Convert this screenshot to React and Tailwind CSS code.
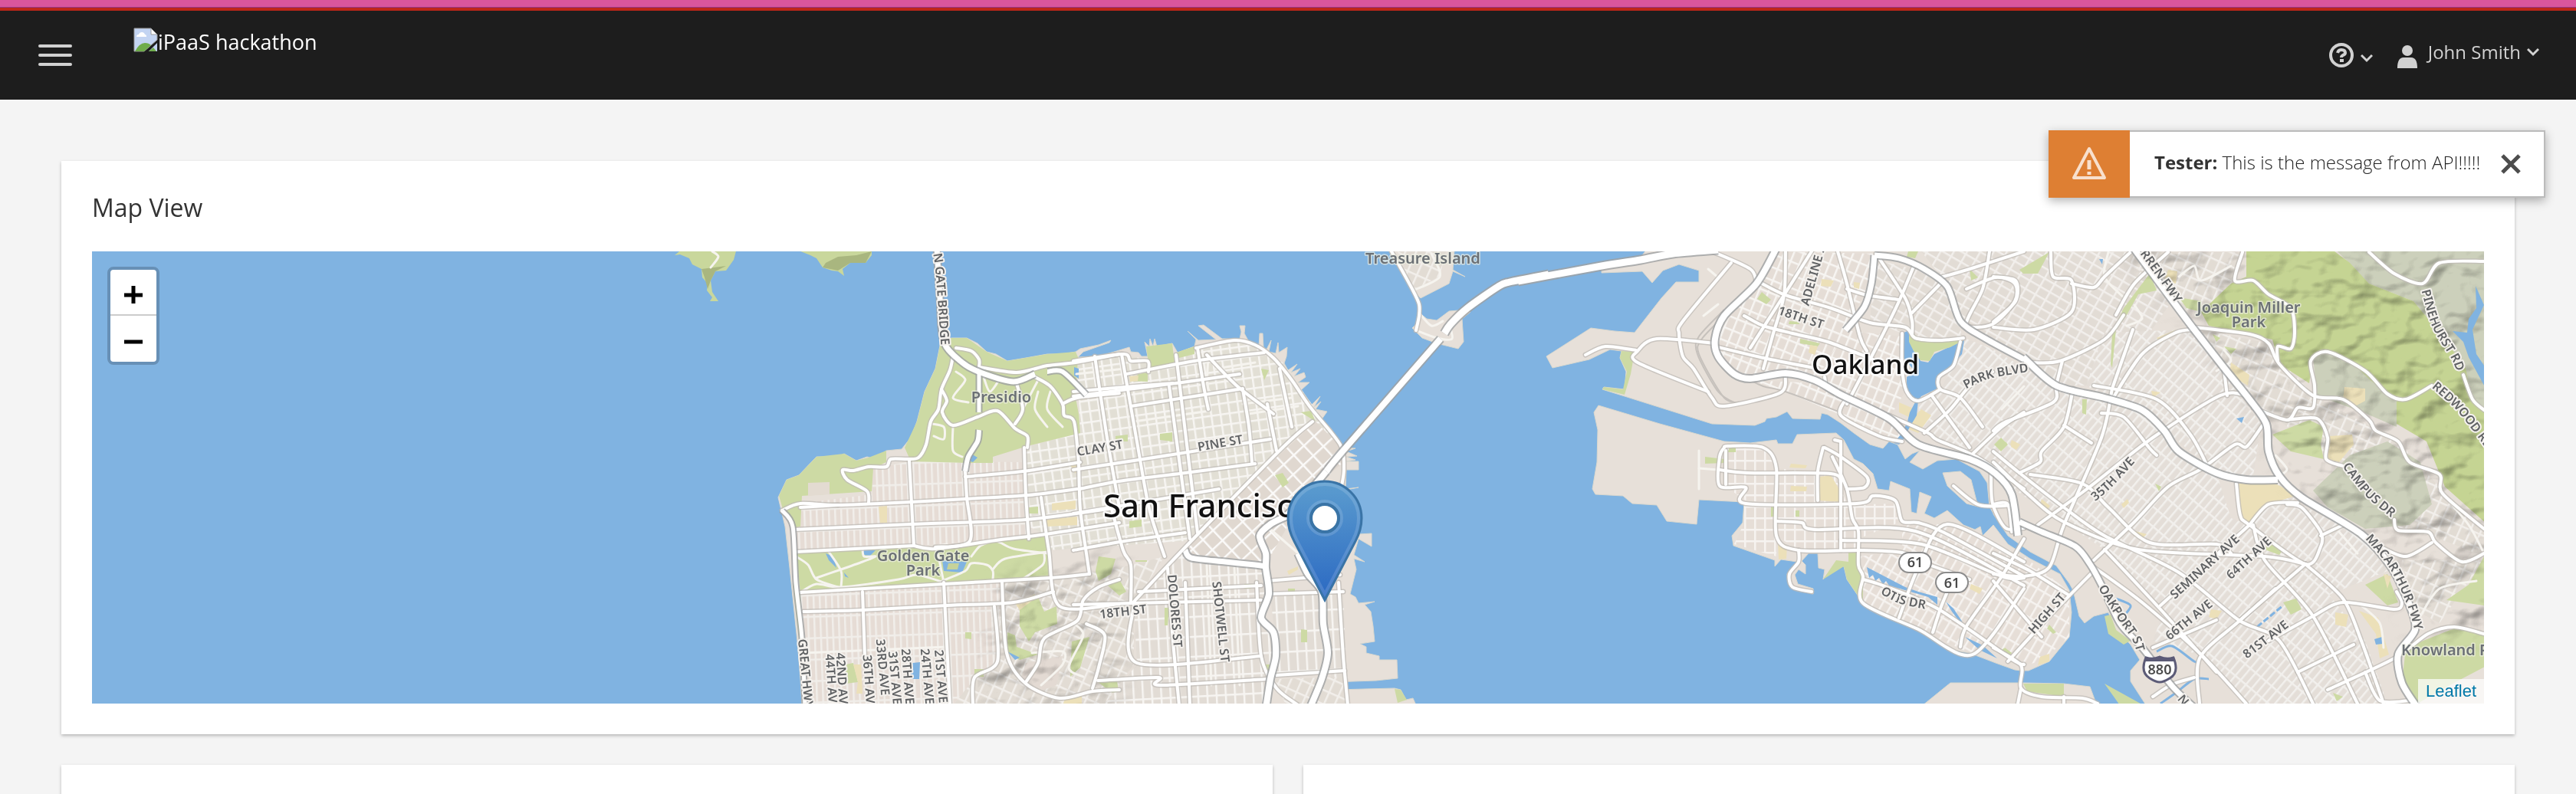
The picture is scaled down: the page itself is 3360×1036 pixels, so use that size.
import React from "react";

/* ---------- Map data ----------
   Geometry is stored per tile. Every tile has its own 1568 x 1568 grid and is
   projected on the shared map canvas. */
const GRID = 1568;
const TILES = {
  W: [840, 320, 620, 600],
  C: [1400, 320, 620, 600],
  O: [1980, 320, 660, 600],
  E: [2600, 320, 760, 716],
};

function points(tile, list) {
  const [ox, oy, w, h] = TILES[tile];
  return list
    .trim()
    .split(/\s+/)
    .map((pair) => {
      const [x, y] = pair.split(",").map(Number);
      return [Math.round(ox + (x * w) / GRID), Math.round(oy + (y * h) / GRID)];
    });
}

function trace(...parts) {
  const all = [];
  for (let i = 0; i < parts.length; i += 2) all.push(...points(parts[i], parts[i + 1]));
  return "M" + all.map((p) => p.join(" ")).join("L");
}

function smooth(tile, list) {
  const p = points(tile, list);
  if (p.length < 3) return "M" + p.map((q) => q.join(" ")).join("L");
  let d = `M${p[0].join(" ")}`;
  for (let i = 0; i < p.length - 1; i++) {
    const a = p[i - 1] || p[i];
    const b = p[i];
    const c = p[i + 1];
    const e = p[i + 2] || c;
    d += `C${b[0] + (c[0] - a[0]) / 7} ${b[1] + (c[1] - a[1]) / 7} ${c[0] - (e[0] - b[0]) / 7} ${c[1] - (e[1] - b[1]) / 7} ${c[0]} ${c[1]}`;
  }
  return d;
}

const SF = trace(
  "W",
  "978,330 1015,315 1065,315 1100,335 1130,362 1160,370 1200,395 1260,385 1330,372 1380,372 1425,362 1440,352 1500,340 1540,323 1535,333 1450,362 1432,382 1500,380 1568,357",
  "C",
  "185,348 190,362 215,365 225,380 245,380 236,330 250,345 253,318 262,345 268,318 275,345 325,335 345,365 400,345 405,322 378,293 412,325 470,322 413,275 430,272 490,318 550,318 555,295 548,275 566,275 565,300 577,325 613,345 615,300 625,300 628,347 638,355 653,325 645,362 668,368 674,333 678,365 705,348 704,380 695,402 708,425 738,405 718,435 748,420 728,448 762,435 766,450 742,468 778,468 752,495 765,525 783,545 815,515 793,552 817,532 800,560 838,568 820,592 850,625 890,690 930,692 900,702 935,718 900,722 930,733 900,738 942,738 942,767 900,767 897,830 940,825 900,834 895,900 940,985 985,983 985,1028 940,1000 925,1055 960,1080 925,1070 932,1105 912,1190 930,1200 940,1220 995,1215 960,1225 980,1250 988,1300 995,1352 945,1360 965,1370 965,1390 1008,1402 1008,1415 1068,1413 1070,1477 1000,1485 850,1490 832,1486 862,1515 1060,1510 1080,1515 1098,1550 1120,1545 1130,1568",
  "W",
  "520,1568 515,1480 505,1350 490,1200 480,1100 465,960 455,915 443,860 470,800 510,785 570,722 640,722 660,712 700,735 735,722 760,730 800,700 850,695 880,655 900,600 925,500 960,420",
);

const EAST_BAY = trace(
  "O",
  "395,20 385,35 380,50 260,82 260,95 385,88 415,128 450,85 500,65 560,85 560,125 490,125 445,180 360,297 300,292 225,283 88,380 107,418 220,390 285,355 320,360 315,385 335,430 330,490 265,483 262,492 330,515 600,608 735,615 765,602 770,590 800,585 835,567 850,590 935,593 940,573 960,578 1000,605 1040,640 1090,680 1130,693 1150,670 1175,680 1200,728 1220,710 1245,700 1215,740 1255,763 1300,735 1360,730 1430,770 1455,810 1460,890 1473,915",
  "E",
  "0,768 40,830 100,875 170,915 205,965 215,985 232,1060 245,1080 270,1060 310,1050 330,1100 370,1140 395,1185 370,1215 370,1245 415,1320 1340,1320 1340,10",
  "O",
  "395,10",
);

const ALAMEDA = trace(
  "O",
  "250,547 235,570 248,630 245,740 230,830 240,850 325,855 355,880 430,885 462,942 553,950 560,868 700,875 697,945 662,990 668,1025 795,1075 797,1095 815,1072 865,1080 835,1120 840,1160 855,1170 915,1190 915,1170 868,1155 858,1125 870,1105 890,1120 890,1090 880,1076 900,1050 930,1050 932,1100 950,1105 945,1140 970,1105 990,1085 1010,1095 1020,1140 1070,1220 1100,1240 1240,1315 1340,1380 1400,1390 1480,1425 1540,1448",
  "E",
  "75,1215 95,1215 150,1190 205,1120 210,1050 205,985 180,940 100,895 40,855 0,800",
  "O",
  "1440,990 1432,960 1415,970 1380,955 1330,905 1290,930 1258,915 1280,858 1245,842 1235,915 1218,910 1215,830 1155,805 1150,835 1115,830 1100,780 1070,745 1040,730 1010,665 985,640 865,645 850,678 805,678 800,665 720,675 640,670 440,610",
);

const LAND = [
  SF,
  EAST_BAY,
  ALAMEDA,
  trace("C", "1040,15 1075,80 1120,155 1145,180 1240,130 1252,90 1293,107 1253,84 1258,15"),
  trace("C", "1140,230 1165,250 1200,255 1240,225 1270,222 1310,227 1283,250 1287,330 1270,353 1240,345 1200,335 1150,315 1118,283 1135,265"),
  trace("O", "1315,775 1370,770 1405,800 1425,890 1390,880 1330,820"),
  trace("O", "1240,1580 1340,1493 1568,1493", "E", "190,1253 260,1262 280,1320"),
];

const HEADLANDS = [
  trace("W", "100,35 130,10 305,10 295,50 270,85 235,90 220,120 225,160 245,190 218,190 225,178 207,155 210,130 192,110 190,80 160,65 150,45 120,32"),
  trace("W", "490,10 550,35 570,45 590,75 620,85 640,90 660,105 655,80 680,60 730,60 750,35 752,10"),
];

const PARKS = [
  trace("W", "978,330 1015,315 1065,315 1130,362 1200,395 1330,372 1425,362 1432,382 1425,520 1435,575 1440,640 1265,685 1150,720 1150,742 1070,742 880,738 860,690 900,600 925,500 960,420"),
  trace("W", "570,722 660,712 700,735 740,725 800,700 800,740 755,760 750,840 520,855 515,960 490,965 460,910 445,855 470,800 510,785"),
  trace("W", "500,1045 890,1025 960,1035 1100,1015 1320,985 1335,1045 1335,1130 1300,1140 980,1160 650,1175 515,1185"),
  trace("W", "490,1150 515,1190 520,1400 505,1300"),
  trace("W", "1240,1220 1300,1200 1320,1250 1360,1230 1362,1290 1290,1320 1270,1350 1240,1300"),
  trace("W", "1200,1320 1225,1330 1230,1370 1300,1395 1240,1415 1200,1390"),
  trace("W", "1410,1350 1470,1335 1440,1440 1405,1470"),
  trace("W", "1500,1060 1555,1070 1540,1120 1500,1145 1490,1110"),
  trace("W", "1060,1320 1080,1320 1080,1342 1060,1340"),
  trace("W", "1090,1445 1120,1445 1120,1470 1090,1470"),
  trace("W", "1530,1160 1568,1140 1590,1180 1568,1195"),
  trace("W", "1270,895 1300,890 1300,915 1270,915"),
  trace("W", "665,1430 690,1425 705,1490 665,1495"),
  trace("C", "240,345 325,335 335,400 250,420"),
  trace("C", "340,365 400,345 400,370 350,385"),
  trace("C", "215,440 245,435 245,465 190,462"),
  trace("C", "285,642 325,637 325,668 285,665"),
  trace("C", "140,650 180,645 180,668 140,668"),
  trace("C", "620,420 645,425 630,460"),
  trace("C", "185,940 225,935 225,960 185,965"),
  trace("C", "665,785 690,775 710,810 690,825"),
  trace("C", "205,1075 243,1073 243,1080 205,1080"),
  trace("C", "300,1235 315,1235 310,1295 300,1295"),
  trace("C", "750,1310 772,1313 772,1355 750,1355"),
  trace("C", "708,1170 732,1170 732,1185 708,1185"),
  trace("C", "565,1155 600,1155 585,1172 565,1172"),
  trace("C", "80,1490 145,1485 150,1520 130,1525"),
  trace("C", "630,1430 650,1430 645,1455"),
  trace("C", "1060,1513 1080,1515 1100,1550 1070,1560"),
  trace("C", "750,570 785,565 800,600"),
  trace("O", "320,360 362,362 350,440 330,510 262,490 265,483 325,490 337,430 315,385"),
  trace("O", "755,160 783,185 770,202 742,182"),
  trace("O", "875,318 935,335 930,345 875,335"),
  trace("O", "840,258 875,262 872,270 838,268"),
  trace("O", "580,722 640,728 640,742 580,745"),
  trace("O", "655,685 675,690 675,705 650,705"),
  trace("O", "1025,1048 1050,1048 1055,1090 1070,1130 1070,1220 1020,1140 1010,1095 945,1140 985,1075 1025,1080"),
  trace("O", "1495,660 1515,675 1495,695 1478,680"),
  trace("O", "1400,80 1425,110 1405,120"),
  trace("O", "1210,20 1240,20 1230,45 1205,40"),
  trace("O", "1505,1375 1530,1390 1515,1405 1495,1390"),
  trace("O", "860,905 872,905 872,925 860,925"),
  trace("O", "785,890 795,890 795,925 785,925"),
  trace("E", "420,80 440,130 390,140 360,200 330,240 320,350 315,340 320,250 350,180"),
  trace("E", "70,70 150,20 120,80 80,80"),
  trace("E", "500,150 560,160 560,190 520,180"),
  trace("E", "750,540 850,500 890,520 880,570 890,610 800,590"),
  trace("E", "1000,970 1060,940 1090,1020 1060,1030"),
  trace("E", "1320,890 1320,1030 1220,1015 1280,970"),
  trace("E", "1110,1150 1240,1095 1330,1110 1330,1200 1240,1250 1140,1310 1100,1250"),
  trace("E", "780,1020 815,1010 830,1040 800,1055"),
  trace("E", "300,1060 315,1055 330,1100 370,1130 350,1140 310,1110"),
  trace("E", "80,1253 190,1253 190,1290 90,1275"),
  trace("E", "300,1253 415,1320 345,1320"),
  trace("E", "20,550 40,570 20,588 2,570"),
  trace("E", "620,290 655,295 640,310"),
  trace("E", "590,255 610,265 600,275"),
  trace("E", "240,440 252,440 250,485 240,480"),
  trace("E", "150,1085 170,1105 160,1110 145,1095"),
  trace("E", "30,1150 50,1165 40,1175 20,1165"),
  trace("E", "915,1280 940,1290 925,1302"),
  trace("E", "740,840 780,870 770,885 730,870"),
  trace("E", "435,680 452,690 445,702"),
];

const REGIONAL_PARK = trace(
  "E",
  "680,10 910,10 960,50 1010,110 1130,160 1200,250 1270,350 1285,430 1330,480 1330,800 1215,690 1165,560 1085,510 1085,440 1020,390 960,330 900,300 860,320 850,395 770,340 750,270 680,255 580,230 560,190 640,110 680,90",
);

const SCHOOLS = [
  trace("W", "775,890 802,888 802,945 778,945"),
  trace("W", "1345,880 1425,870 1425,900 1345,905"),
  trace("W", "1325,935 1430,925 1430,955 1330,960"),
  trace("W", "1405,750 1435,745 1425,780"),
  trace("W", "1225,1220 1290,1190 1290,1205 1240,1245"),
  trace("W", "690,1430 715,1430 720,1530 700,1530 705,1490"),
  trace("W", "1390,1540 1445,1535 1445,1568 1380,1568"),
  trace("C", "705,1110 740,1095 740,1105 710,1125"),
  trace("C", "185,448 215,445 212,462 187,465"),
  trace("O", "940,115 978,120 970,142 938,138"),
  trace("O", "1040,125 1060,128 1058,148 1040,145"),
  trace("O", "935,790 970,785 997,835 997,875 932,870"),
  trace("O", "845,745 895,750 890,760 842,758"),
  trace("O", "845,820 895,822 893,838 843,838"),
  trace("O", "805,1010 835,1025 832,1070 808,1072"),
  trace("O", "1180,535 1230,560 1220,590 1180,570"),
  trace("O", "1250,560 1280,580 1240,640 1205,625 1225,585"),
  trace("O", "1405,1155 1440,1170 1430,1190 1400,1170"),
  trace("O", "1530,665 1555,680 1545,695 1525,680"),
  trace("O", "905,340 930,345 920,375 900,365"),
  trace("E", "470,70 495,75 490,110 460,100"),
  trace("E", "640,335 690,370 685,400 635,370"),
  trace("E", "945,405 1000,410 1000,445 965,465 940,440"),
  trace("E", "905,545 965,540 970,570 930,620 900,610"),
  trace("E", "660,680 760,682 820,715 740,740 690,800 665,770"),
  trace("E", "375,815 412,825 400,838 378,830"),
  trace("E", "425,415 450,420 430,435"),
  trace("E", "920,1050 955,1055 950,1090 920,1085"),
  trace("E", "985,1045 1035,1065 1065,1170 1040,1180 1030,1110"),
  trace("E", "130,725 152,745 145,758 125,740"),
  trace("E", "585,1040 615,1045 600,1068 580,1062"),
  trace("E", "345,740 362,725 365,735 350,752"),
  trace("E", "440,265 490,240 470,260 450,280"),
  trace("E", "50,560 72,570 62,585 48,575"),
  trace("E", "1050,940 1070,945 1060,980"),
  trace("E", "125,1175 150,1168 150,1190 120,1200"),
];

const LAKES = [
  trace("O", "1190,300 1212,290 1230,350 1248,395 1270,400 1290,372 1370,330 1382,325 1375,370 1350,405 1330,425 1305,450 1305,485 1250,515 1240,530 1235,580 1212,625 1195,660 1180,680 1165,675 1190,640 1208,600 1215,570 1230,535 1205,500 1205,450 1230,430 1195,385"),
  trace("W", "720,1038 765,1040 745,1058 725,1055"),
  trace("W", "600,1050 625,1060 635,1100 610,1075"),
  trace("W", "985,1075 1065,1080 1050,1115 990,1110"),
  trace("W", "660,1115 675,1135 662,1130"),
  trace("W", "1420,415 1435,420 1435,455 1418,445"),
  trace("W", "1080,710 1100,725 1085,740 1070,735"),
  trace("W", "885,1425 910,1422 908,1480 878,1480"),
  trace("W", "1198,1385 1240,1405 1225,1415"),
  trace("O", "1080,1097 1200,1165 1240,1180 1300,1200 1300,1225 1270,1200 1240,1190 1150,1160 1140,1145 1130,1158 1120,1135 1108,1145 1100,1125 1088,1135"),
  trace("O", "1325,1215 1350,1240 1378,1285 1365,1280 1345,1250"),
  trace("O", "1385,1335 1440,1365 1485,1408 1430,1380"),
  trace("E", "1297,115 1320,170 1290,240 1300,310 1330,360 1330,420 1280,320 1265,275 1235,245 1275,250 1280,210 1300,180"),
  trace("E", "655,495 675,490 668,508"),
  trace("E", "1025,1125 1045,1120 1048,1138 1030,1142"),
  trace("E", "285,40 295,40 293,55"),
];

const LAKE_PARK = trace("O", "1212,290 1250,325 1380,325 1340,348 1290,362 1275,395 1248,393 1225,360 1212,330");

/* Dense residential blocks: [pattern id, outline] */
const BLOCKS = [
  ["avenues", trace("W", "515,880 750,850 755,760 880,738 1250,740 1270,1000 890,1025 500,1045 495,965 515,960")],
  ["avenues", trace("W", "515,1190 990,1155 1180,1150 1165,1420 1090,1480 1020,1568 525,1568")],
  ["marina", trace("W", "1430,400 1568,370", "C", "245,390 345,375 560,325 690,400 880,680 790,600 560,830 370,1010", "W", "1335,1040 1320,985 1270,960 1250,690 1440,640")],
  ["soma", trace("C", "800,600 885,690 890,740 760,860 640,1080 390,1060 370,1030 560,830")],
  ["mission", trace("C", "370,1040 390,1070 600,1090 640,1100 620,1270 665,1330 650,1470 640,1568 100,1568 210,1430 200,1225")],
  ["mission", trace("C", "650,1200 890,1180 905,1568 840,1568 850,1460 660,1465 665,1330")],
  ["hillside", trace("W", "1180,1150 1335,1140 1568,1100", "C", "300,1060 200,1220 200,1430 100,1568", "W", "1020,1568 1090,1480 1165,1420")],
  ["hillside", trace("C", "665,1480 905,1470 905,1568 700,1568")],
  ["hillside", trace("C", "1070,20 1230,20 1210,105 1120,155")],
  ["westOakland", trace("O", "650,250 740,140 800,20 1100,30 1090,130 1015,290 930,450 830,437 720,455 640,400 610,330")],
  ["westOakland", trace("O", "1015,290 1190,310 1200,500 1150,590 930,460")],
  ["westOakland", trace("O", "720,460 930,470 1150,600 1200,665 1130,660 1000,580 830,500")],
  ["uptown", trace("O", "1110,50 1260,90 1330,160 1380,320 1250,325 1090,260")],
  ["uptown", trace("O", "1250,20 1568,20", "E", "380,20 480,160 320,400 170,400 0,270", "O", "1390,270 1320,120")],
  ["eastOakland", trace("O", "1240,520 1310,490 1390,320 1473,355", "E", "170,405 400,470 500,590 600,650 640,780 690,800 450,1030 300,870 60,700", "O", "1400,720 1250,640")],
  ["eastOakland", trace("E", "470,1010 690,800 840,910 1000,1130 1060,1310 690,1310 550,1170 430,1130")],
  ["eastOakland", trace("E", "250,400 300,250 530,240 720,510 700,660 600,650 450,520")],
  ["eastOakland", trace("E", "770,670 820,735 990,830 1060,930 900,1000 840,910 690,800 650,680")],
  ["hillside", trace("E", "340,20 670,20 640,110 560,200 490,170")],
  ["hillside", trace("E", "560,240 740,280 860,430 1090,560 1210,700 1320,810 1320,890 1180,830 1060,800 900,600 700,450")],
  ["hillside", trace("E", "1100,900 1320,900 1200,1080 1130,1040")],
  ["alameda", trace("O", "640,690 760,690 800,760 980,780 1020,880 800,880 705,870 640,820")],
  ["alameda", trace("O", "800,890 1170,880 1190,940 1055,1000 1055,1045 870,1040 800,990")],
  ["alameda", trace("O", "700,880 800,890 800,1060 670,1020 700,945")],
  ["diagonal", trace("O", "1190,950 1330,950 1568,1060", "E", "205,990 205,1120 130,1190 80,1200 0,1150", "O", "1410,1395 1070,1220 1060,1060 1190,1040")],
];

const HILLS = [
  trace("E", "920,10 1330,10 1330,480 1285,430 1270,350 1200,250 1130,160 1010,110"),
  trace("E", "860,700 960,600 1060,560 1150,620 1180,740 1120,800 1000,810 900,750"),
  trace("E", "900,300 960,330 1085,440 1085,520 1000,480 870,430 860,320"),
];

const RELIEF = [
  ...HILLS,
  trace("E", "340,10 1330,10 1330,900 1100,880 990,820 780,650 720,480 540,240"),
  trace("W", "1160,1150 1568,1040 1568,1568 1100,1568"),
  trace("E", "1080,820 1330,880 1330,1120 1120,1100"),
];

const MINOR = [
  ["W", "500,1060 540,1090 570,1140 640,1165"],
  ["W", "610,1045 650,1110 650,1165"],
  ["W", "570,1135 650,1105 720,1080 765,1060 725,1060 720,1030"],
  ["W", "985,1145 1060,1110 1080,1085 1130,1090 1150,1110 1150,1140"],
  ["W", "1080,1060 1110,1025 1160,1010 1220,1035 1330,1050"],
  ["W", "1150,1105 1190,1070 1330,1045"],
  ["W", "515,1185 570,1155 650,1165 840,1140 900,1125 990,1150"],
  ["W", "990,1150 970,1060 960,1030 1000,1020"],
  ["W", "1320,1050 1315,1090 1240,1145"],
  ["W", "1030,430 1060,460 1020,520 1070,535"],
  ["W", "1120,450 1140,500 1170,460"],
  ["W", "1250,560 1300,460"],
  ["W", "1300,500 1290,560 1330,620"],
  ["W", "1340,500 1330,560 1380,620"],
  ["W", "1020,620 1020,700 1050,720"],
  ["W", "950,610 990,620 990,660 955,650"],
  ["W", "525,1390 1000,1370"],
  ["W", "1280,1390 1380,1385 1380,1430 1310,1500"],
  ["W", "1420,1290 1450,1330 1400,1440 1450,1470"],
  ["W", "220,75 245,40 225,20"],
  ["C", "10,440 170,420"],
  ["C", "200,600 450,565"],
  ["C", "445,380 450,500 560,485"],
  ["C", "470,420 600,400"],
  ["C", "560,540 720,520"],
  ["C", "580,575 740,550"],
  ["C", "1120,155 1210,108 1180,30"],
  ["C", "1140,230 1180,275 1220,260"],
  ["C", "1130,290 1200,315 1250,320 1240,270"],
  ["C", "640,960 830,1130"],
  ["C", "440,1090 455,1500"],
  ["C", "530,1100 550,1500"],
  ["O", "560,700 560,830"],
  ["O", "560,760 620,765"],
  ["O", "575,240 620,200"],
  ["O", "590,80 620,110"],
  ["O", "1500,560 1568,480"],
  ["E", "310,20 300,90 350,150"],
  ["E", "380,170 400,210 360,230"],
  ["E", "500,90 540,60 560,100 640,60"],
  ["E", "620,300 640,330 600,360"],
  ["E", "760,600 790,640 770,660"],
  ["E", "1200,700 1280,800 1320,880"],
  ["E", "990,1030 1040,1080 1050,1150"],
  ["E", "930,820 980,880"],
  ["E", "1150,1060 1200,980 1300,960"],
];

const MAJOR = [
  ["W", "1060,770 1065,860 1075,1010 960,1030"],
  ["W", "1105,415 1230,435 1330,410 1425,400 1568,370"],
  ["W", "1030,350 1080,360 1105,390 1105,415"],
  ["W", "1020,380 1010,425 980,490 970,560 945,600 930,680 905,725 870,730 815,730 800,755 740,755 690,768 655,765 670,800 735,840 740,880"],
  ["W", "980,490 1000,530 985,570 1020,615 1100,585 1165,565 1225,625 1265,650 1265,690"],
  ["W", "1225,610 1250,560 1230,470"],
  ["W", "1290,450 1340,480 1380,540 1385,580 1420,600 1435,740"],
  ["W", "1380,540 1430,520 1568,505"],
  ["W", "455,905 515,880 640,887 880,875 1060,865 1270,852 1430,830"],
  ["W", "515,893 640,887"],
  ["W", "495,970 880,950 1260,935 1568,895"],
  ["W", "500,1045 890,1025"],
  ["W", "890,1025 960,1035 1160,1005 1325,985 1568,945"],
  ["W", "875,735 890,1025"],
  ["W", "1255,690 1260,850 1270,1000"],
  ["W", "1060,790 1250,770 1440,740"],
  ["W", "515,1185 990,1155 1340,1135 1470,1120"],
  ["W", "525,1250 720,1243 1000,1228 1220,1218 1350,1180"],
  ["W", "720,1180 728,1400"],
  ["W", "990,1150 1010,1568"],
  ["W", "1180,1150 1195,1390 1260,1495 1370,1545 1480,1520 1568,1515"],
  ["W", "1155,1230 1165,1420 1090,1475 1085,1568"],
  ["W", "1310,860 1335,1040 1370,1230 1568,1222"],
  ["W", "1435,740 1440,900 1460,1050 1470,1120"],
  ["W", "1260,1490 1300,1425 1320,1340 1430,1280 1450,1210 1500,1165 1568,1140"],
  ["W", "1460,1290 1520,1330 1500,1440 1480,1510"],
  ["C", "0,395 165,370 190,395 245,395 248,430"],
  ["C", "175,440 400,395 630,365"],
  ["C", "0,515 340,470 550,440"],
  ["C", "0,500 200,480 330,470"],
  ["C", "190,550 400,515 560,488"],
  ["C", "70,380 110,640 150,880"],
  ["C", "160,370 215,700 250,900 300,1060"],
  ["C", "340,375 375,680 410,980"],
  ["C", "315,480 385,1000"],
  ["C", "410,350 430,480 445,560"],
  ["C", "440,375 540,480 660,575"],
  ["C", "0,765 200,735 650,660"],
  ["C", "20,830 150,805 370,775 600,745"],
  ["C", "0,915 200,880 480,830"],
  ["C", "0,1040 170,1010 370,980"],
  ["C", "120,870 165,1040 190,1090 190,1215"],
  ["C", "560,490 580,620 590,740"],
  ["C", "640,540 670,700"],
  ["C", "680,420 720,620"],
  ["C", "405,350 530,325 600,340 660,385 720,460 780,550 880,680 892,760 885,820"],
  ["C", "200,1215 370,1030 690,690 790,600"],
  ["C", "215,1180 620,1160"],
  ["C", "0,1225 200,1220 620,1210"],
  ["C", "200,1225 210,1425 620,1400"],
  ["C", "310,1100 330,1350 350,1568"],
  ["C", "370,1150 385,1568"],
  ["C", "605,1150 620,1400 670,1510 740,1568"],
  ["C", "80,1485 280,1475 285,1500 640,1480"],
  ["C", "640,1145 880,1125"],
  ["C", "640,1190 890,1180"],
  ["C", "670,1465 895,1450"],
  ["C", "875,1150 890,1400 905,1568"],
  ["C", "1050,20 1120,155 1140,200 1140,240 1130,290"],
  ["O", "600,22 720,80 740,130"],
  ["O", "660,60 510,260 500,300 510,380 545,420 600,520 640,550 810,505 830,450"],
  ["O", "210,375 270,345 365,358"],
  ["O", "590,500 370,400 370,360 430,320 610,335"],
  ["O", "610,345 760,385 930,420"],
  ["O", "740,120 830,170 970,215 1090,265 1200,280 1230,315 1310,325 1380,315"],
  ["O", "700,240 760,275 850,300 960,330 1100,390"],
  ["O", "830,20 825,170 790,300 760,420"],
  ["O", "910,20 840,140 720,350"],
  ["O", "990,20 1020,130 1060,310 1080,360"],
  ["O", "1230,60 1180,190 1120,330 1020,540"],
  ["O", "1110,30 1200,180 1220,260 1220,300"],
  ["O", "1020,150 1080,170 1180,185"],
  ["O", "950,450 960,490 1000,510"],
  ["O", "1020,520 1000,580 1120,650 1190,670"],
  ["O", "1190,300 1190,420 1205,500 1240,530 1310,490"],
  ["O", "1370,330 1350,410 1305,450 1310,490 1370,520 1440,620"],
  ["O", "1260,640 1340,560 1400,480 1470,430"],
  ["O", "1150,580 1270,640 1300,665 1420,720 1568,830"],
  ["O", "1280,510 1400,690"],
  ["O", "1400,720 1500,620 1568,570"],
  ["O", "1310,110 1400,80 1568,20"],
  ["O", "1460,20 1440,150 1390,270 1470,270 1540,190 1540,130 1480,110 1390,150"],
  ["O", "1220,230 1310,130"],
  ["O", "640,690 650,685 760,690 800,760 800,990 870,1040 1055,1040 1190,1048 1250,1080 1400,1140"],
  ["O", "640,690 625,720 625,820 705,825 705,880 1050,880 1100,855 1170,870 1190,940 1240,945 1320,980 1568,1130"],
  ["O", "645,700 645,815"],
  ["O", "625,765 710,775 970,780 1000,810"],
  ["O", "800,940 880,945 920,970 1230,975 1568,1160"],
  ["O", "1000,1005 1250,1020 1500,1130 1568,1135"],
  ["O", "1000,670 1000,1040"],
  ["O", "980,665 1000,670"],
  ["O", "945,690 930,770 930,870"],
  ["O", "950,690 1000,720 1080,790 1075,825 1020,830"],
  ["O", "975,720 1020,830 1035,930 1055,975 1055,1090 1070,1130 1070,1220 1240,1310 1410,1395 1568,1170"],
  ["O", "1180,1270 1240,1100 1330,950 1568,1080"],
  ["O", "1285,1320 1310,1240 1330,1180"],
  ["O", "1370,1370 1390,1300 1500,1130 1568,1000"],
  ["O", "1070,1140 1130,1160 1300,1240 1530,1410 1568,1430"],
  ["O", "870,1040 870,1080 840,1120 850,1165 910,1180"],
  ["O", "1350,820 1430,885 1540,885"],
  ["O", "1465,780 1470,880 1510,965 1568,965"],
  ["E", "0,590 70,650 190,750 300,830 500,935 660,1070 770,1130 860,1310"],
  ["E", "0,620 90,710 190,790 390,870 730,890 840,910"],
  ["E", "840,910 940,1010 990,1130 1050,1310"],
  ["E", "100,655 240,680 310,750 420,850 600,855 640,880"],
  ["E", "0,530 30,505 160,450 170,400 185,330"],
  ["E", "215,410 190,520 130,590 125,620 70,650"],
  ["E", "190,515 265,565"],
  ["E", "320,410 290,550 190,800 150,920 80,945 0,940"],
  ["E", "270,900 380,790 470,690 560,640 650,570 680,575 725,515"],
  ["E", "120,800 260,690 430,550 610,430 680,430"],
  ["E", "270,400 440,440 530,540 580,640"],
  ["E", "290,480 350,490 420,580 440,600"],
  ["E", "350,200 300,270 180,330 100,335"],
  ["E", "375,240 320,410"],
  ["E", "330,200 380,110 470,20"],
  ["E", "320,440 400,310 490,250 540,240"],
  ["E", "0,235 110,240 210,190 210,100 160,90 155,20"],
  ["E", "0,90 60,100 60,160 0,220"],
  ["E", "210,110 270,120 300,90 370,20"],
  ["E", "630,430 620,360"],
  ["E", "540,235 690,255 740,280 770,340 860,430 940,440 1010,500 1030,530 1090,560 1120,620 1200,655 1210,710 1320,810"],
  ["E", "670,20 650,100 700,100 740,140 800,180 810,250 800,295 765,290 765,330"],
  ["E", "700,465 790,500 820,465 860,465 865,400 855,330 900,305 1000,360 1060,425 1110,440 1180,400"],
  ["E", "1010,20 1080,80 1155,110 1200,50 1320,45"],
  ["E", "1265,370 1290,440 1320,470"],
  ["E", "790,500 870,495 900,550 895,610 940,630"],
  ["E", "1080,785 1090,815 1170,820 1190,850 1260,905 1320,880"],
  ["E", "1040,860 1110,890 1180,850"],
  ["E", "655,680 665,770 690,800 840,910 880,860 880,820 830,750 790,740"],
  ["E", "690,800 740,740 820,735"],
  ["E", "880,830 940,800"],
  ["E", "555,1310 555,1180 660,1075 840,910"],
  ["E", "270,920 400,1020 560,1170 680,1310"],
  ["E", "300,870 450,1040 600,1220"],
  ["E", "700,800 730,900 860,1060 980,1310"],
  ["E", "660,1075 760,980"],
  ["E", "740,1130 860,1060 940,1020 1080,1040 1100,1020 1085,990"],
  ["E", "820,1220 970,1140"],
  ["E", "900,1270 1080,1180 1170,1110 1240,1090 1320,1110"],
  ["E", "1000,1220 1040,1300 1120,1300"],
  ["E", "450,1030 690,800"],
  ["E", "430,1150 600,1070"],
  ["E", "0,880 100,930 205,1000"],
  ["E", "0,960 130,1120"],
  ["E", "40,1190 150,1060 270,930"],
  ["E", "0,1150 75,1200 75,1265 130,1290 240,1295 280,1310"],
  ["E", "75,1265 65,1310"],
  ["E", "190,1290 190,1310"],
  ["E", "430,1290 480,1255 540,1235"],
  ["E", "0,740 40,740 50,820"],
];

/* [tile, course, width] */
const FREEWAYS = [
  ["W", "965,10 975,180 990,330 1050,400 1110,435 1220,465 1290,440", 7],
  ["W", "1330,430 1380,430 1460,510", 6],
  ["W", "1105,440 1105,570", 5],
  ["W", "1105,630 1100,670 1070,720 1060,770", 6],
  ["W", "455,905 490,960 500,1150 520,1340 530,1568", 5],
  ["C", "370,1040 390,1065 500,1078 600,1090 635,1095", 7],
  ["C", "700,925 650,950 615,990 635,1050 635,1100 645,1190 620,1270 660,1320 668,1400 650,1480 635,1580", 8],
  ["C", "700,925 780,840 835,770", 8],
  ["C", "740,1050 775,1120 820,1180 825,1290 840,1390 820,1480 780,1580", 8],
  ["C", "835,770 890,700 1212,318", 8],
  ["C", "1225,300 1245,270 1300,215 1400,140 1440,125 1568,100", 9],
  ["O", "0,122 260,70 380,50 480,30 620,15", 9],
  ["O", "800,10 740,130 640,240 610,320 620,380 670,440 720,455 830,437 920,460 1000,510 1150,590 1240,680 1400,730 1480,780 1530,850 1550,990", 8],
  ["O", "1105,35 1180,45 1260,80 1330,140 1370,260 1450,320 1568,390", 7],
  ["O", "1105,35 1095,130 1075,210 1015,290", 7],
  ["E", "80,320 170,400 300,435 400,470 460,530 500,590 600,650 680,670 765,670", 8],
  ["E", "380,10 490,170 540,240 620,350 690,440 735,510 740,590 770,660 830,720 990,825 1070,920 1120,1030 1135,1100 1090,1170 1100,1250 1140,1320", 8],
  ["E", "70,790 130,820 220,860 260,910 290,970 340,1080 400,1150 480,1260 540,1320", 7],
];

const STREET_LABELS = [
  ["N GATE BRIDGE", "W", "946,-8 960,80 978,330 984,380"],
  ["CLAY ST", "C", "0,722 180,690"],
  ["PINE ST", "C", "395,705 580,672"],
  ["18TH ST", "C", "70,1275 260,1253"],
  ["DOLORES ST", "C", "308,1095 335,1400"],
  ["SHOTWELL ST", "C", "454,1115 490,1455"],
  ["GREAT HWY", "W", "506,1315 533,1610"],
  ["44TH AVE", "W", "597,1375 612,1605"],
  ["42ND AVE", "W", "632,1375 647,1605"],
  ["36TH AVE", "W", "722,1380 737,1605"],
  ["33RD AVE", "W", "765,1325 785,1555"],
  ["31ST AVE", "W", "804,1362 824,1592"],
  ["28TH AVE", "W", "846,1355 866,1590"],
  ["24TH AVE", "W", "910,1355 930,1590"],
  ["21ST AVE", "W", "957,1355 977,1590"],
  ["ADELINE ST", "O", "895,230 965,-40"],
  ["18TH ST", "O", "792,230 955,290"],
  ["PARK BLVD", "O", "1355,510 1460,455 1620,425"],
  ["OTIS DR", "O", "1105,1175 1180,1220 1280,1243"],
  ["RREN FWY", "E", "385,10 440,90 500,180"],
  ["35TH AVE", "E", "260,745 320,690 395,605"],
  ["HIGH ST", "E", "95,1130 210,990"],
  ["OAKPORT ST", "E", "270,960 330,1060 375,1130 390,1185"],
  ["SEMINARY AVE", "E", "465,1035 690,820"],
  ["64TH AVE", "E", "620,975 770,830"],
  ["66TH AVE", "E", "455,1145 610,1015"],
  ["81ST AVE", "E", "660,1200 820,1070"],
  ["PINEHURST RD", "E", "1145,100 1180,230 1235,330 1255,390"],
  ["REDWOOD RD", "E", "1165,395 1250,475 1340,600"],
  ["CAMPUS DR", "E", "920,605 1000,715 1095,800"],
  ["MACARTHUR FWY", "E", "985,820 1065,920 1115,1030 1140,1125"],
  ["N", "E", "485,1285 520,1330"],
];

const at = (tile, pair) => points(tile, pair)[0];

const PLACES = [
  ["Treasure Island", at("C", "1153,62")],
  ["Presidio", at("W", "1179,537")],
  ["Golden Gate", at("W", "920,1076")],
  ["Park", at("W", "920,1127")],
  ["Joaquin Miller", at("E", "687,193")],
  ["Park", at("E", "688,235")],
];

/* [id, cell width, cell height, angle, block colour, street colour] */
const PATTERNS = [
  ["avenues", 8, 28, -2, "#e6dcd5", "#f1eeea"],
  ["marina", 12, 14, -8, "#e2dfd5", "#f7f5f2"],
  ["soma", 18, 18, -43, "#e0d8d0", "#fbfaf9"],
  ["mission", 12, 26, -3, "#e2dcd5", "#f7f5f2"],
  ["hillside", 13, 17, 24, "#e2dcd4", "#f2efeb"],
  ["westOakland", 12, 16, 22, "#e5ddd6", "#f7f5f2"],
  ["uptown", 15, 12, 30, "#e2dcd5", "#f2efec"],
  ["eastOakland", 9, 20, 40, "#e4ded8", "#f2f0ed"],
  ["alameda", 13, 15, 0, "#e6ded7", "#f6f3f0"],
  ["diagonal", 11, 19, 30, "#e6ded7", "#f6f3f0"],
];

function MapArt() {
  return (
    <svg
      className="block h-full w-full"
      viewBox="120 328 3120 590"
      preserveAspectRatio="xMidYMid slice"
      role="img"
      aria-label="Map of San Francisco and Oakland"
    >
      <defs>
        {PATTERNS.map(([id, w, h, angle, fill, line]) => (
          <pattern key={id} id={id} width={w} height={h} patternUnits="userSpaceOnUse" patternTransform={`rotate(${angle})`}>
            <rect width={w} height={h} fill={fill} />
            <path d={`M0 0H${w}M0 0V${h}`} stroke={line} strokeWidth="5" />
          </pattern>
        ))}
        <linearGradient id="pin" x1="0" y1="0" x2="0" y2="1">
          <stop offset="0" stopColor="#5c9dcf" />
          <stop offset="1" stopColor="#2a68c2" />
        </linearGradient>
        <filter id="relief" x="0" y="0" width="1" height="1" colorInterpolationFilters="sRGB">
          <feTurbulence type="fractalNoise" baseFrequency="0.018 0.026" numOctaves="3" seed="8" />
          <feDiffuseLighting surfaceScale="10" diffuseConstant="1.15" lightingColor="#ffffff" result="lit">
            <feDistantLight azimuth="225" elevation="60" />
          </feDiffuseLighting>
          <feGaussianBlur in="SourceAlpha" stdDeviation="14" result="soft" />
          <feComposite in="lit" in2="soft" operator="in" />
        </filter>
        <clipPath id="ground">
          <path d={SF} />
          <path d={EAST_BAY} />
        </clipPath>
      </defs>

      <rect x="0" y="300" width="3360" height="660" fill="#80b3e1" />

      <g fill="#e7e0d9" stroke="#d9d8cf" strokeWidth="1">
        {LAND.map((d, i) => <path key={i} d={d + "Z"} />)}
      </g>
      {BLOCKS.map(([id, d], i) => (
        <path key={i} d={d + "Z"} fill={`url(#${id})`} />
      ))}
      <g clipPath="url(#ground)" fill="#ccd0bb">
        {HILLS.map((d, i) => <path key={i} d={d + "Z"} />)}
      </g>
      <g fill="#c9d79c">
        {HEADLANDS.map((d, i) => <path key={i} d={d + "Z"} />)}
      </g>
      <g fill="#a9b67f">
        <path d={trace("W", "190,80 270,70 235,90 220,120 210,150 200,110") + "Z"} />
        <path d={trace("W", "600,60 640,40 700,35 750,20 730,60 680,60 640,85 590,75") + "Z"} />
      </g>
      <g fill="#cddaa4">
        {PARKS.map((d, i) => <path key={i} d={d + "Z"} />)}
      </g>
      <path d={REGIONAL_PARK + "Z"} fill="#c5d493" />
      <path d={trace("W", "540,810 612,808 612,850 540,855") + "Z"} fill="#e3dbd1" />
      <path d={trace("W", "1260,1425 1380,1400 1360,1500 1290,1525 1245,1480") + "Z"} fill="#e3dad3" />
      <g fill="#ece0b9">
        {SCHOOLS.map((d, i) => <path key={i} d={d + "Z"} />)}
      </g>
      <g className="mix-blend-multiply" clipPath="url(#ground)" opacity="0.6">
        <g filter="url(#relief)">
          {RELIEF.map((d, i) => <path key={i} d={d + "Z"} />)}
        </g>
      </g>
      <g fill="#80b3e1">
        {LAKES.map((d, i) => <path key={i} d={d + "Z"} />)}
      </g>
      <path d={LAKE_PARK + "Z"} fill="#cddaa4" />
      <path d={trace("W", "1005,1085 1040,1085 1035,1105 1000,1105") + "Z"} fill="#c6d29a" />
      <g fill="none" stroke="#80b3e1" strokeWidth="3">
        <path d={smooth("E", "440,1160 480,1145 540,1190 555,1190")} />
        <path d={smooth("E", "450,1310 490,1280 540,1240 580,1240")} />
        <path d={smooth("E", "330,1010 370,1030 350,1060")} />
        <path d={smooth("E", "710,1090 780,1030")} strokeDasharray="8 3" />
      </g>

      {/* rail yard */}
      <g fill="none" stroke="#c6c1bc" strokeWidth="2">
        <path d={smooth("O", "640,220 560,310 555,370 620,500 680,540")} />
        <path d={smooth("O", "640,240 570,320 560,370 640,520 700,535")} />
        <path d={smooth("O", "700,450 760,480 830,500 1000,570")} />
      </g>

      {/* roads: casings first, then surfaces */}
      <g fill="none" strokeLinecap="round" strokeLinejoin="round">
        {MINOR.map(([t, p], i) => (
          <path key={i} d={smooth(t, p)} stroke="#f6f4ef" strokeWidth="3" />
        ))}
        {MAJOR.map(([t, p], i) => (
          <path key={i} d={smooth(t, p)} stroke="#bfbbb5" strokeWidth="7" strokeOpacity="0.75" />
        ))}
        {MAJOR.map(([t, p], i) => (
          <path key={i} d={smooth(t, p)} stroke="#ffffff" strokeWidth="4" />
        ))}
        {FREEWAYS.map(([t, p, w], i) => (
          <path key={i} d={smooth(t, p)} stroke="#9fa1a2" strokeWidth={w + 4} strokeLinecap="butt" strokeOpacity="0.8" />
        ))}
        {FREEWAYS.map(([t, p, w], i) => (
          <path key={i} d={smooth(t, p)} stroke="#ffffff" strokeWidth={w} strokeLinecap="butt" />
        ))}
      </g>

      {/* labels */}
      <g className="font-['Noto_Sans',sans-serif] text-[16px] font-semibold" fill="#606264" stroke="#f4f1ed" strokeWidth="4" strokeLinejoin="round" textAnchor="middle" paintOrder="stroke">
        {STREET_LABELS.map(([text, t, p], i) => (
          <React.Fragment key={i}>
            <path id={`street-${i}`} d={smooth(t, p)} fill="none" stroke="none" />
            <text>
              <textPath href={`#street-${i}`} startOffset="50%">{text}</textPath>
            </text>
          </React.Fragment>
        ))}
      </g>
      <g className="font-['Noto_Sans',sans-serif] text-[20px] font-semibold" fill="#6b7075" stroke="#eef0e2" strokeWidth="3" strokeOpacity="0.7" strokeLinejoin="round" textAnchor="middle" paintOrder="stroke">
        {PLACES.map(([text, [x, y]], i) => (
          <text key={i} x={x} y={y}>{text}</text>
        ))}
        <text x="3132" y="855" textAnchor="start">Knowland Park</text>
      </g>
      <g className="font-['Noto_Sans',sans-serif] font-medium" fill="#111111" stroke="#ffffff" strokeWidth="5" strokeOpacity="0.8" strokeLinejoin="round" paintOrder="stroke">
        <text x="1439" y="675" className="text-[42px]">San Francisco</text>
        <text x="2363" y="488" className="text-[35px]">Oakland</text>
      </g>

      {/* route shields */}
      <g className="font-['Noto_Sans',sans-serif] text-[18px] font-semibold" fill="#4b4b4b" textAnchor="middle">
        <rect x="2477" y="721" width="42" height="26" rx="13" fill="#ffffff" stroke="#8c8c8c" strokeWidth="2" />
        <text x="2498" y="740">61</text>
        <rect x="2525" y="747" width="42" height="26" rx="13" fill="#ffffff" stroke="#8c8c8c" strokeWidth="2" />
        <text x="2546" y="767">61</text>
        <path d="M2799 858q9 3 18-1q9 4 18 1q8 20-5 27q-8 5-13 5q-5 0-13-5q-13-8-5-27z" fill="#ffffff" stroke="#5c5b77" strokeWidth="3" />
        <path d="M2799 858q9 3 18-1q9 4 18 1l1 5h-38z" fill="#5c5b77" />
        <text x="2817" y="880">880</text>
      </g>

      {/* marker */}
      <path
        d="M1728 783L1688 706C1682 695 1680 687 1680 676A48 48 0 0 1 1776 676C1776 687 1774 695 1768 706Z"
        fill="url(#pin)"
        stroke="#3a74a6"
        strokeWidth="3"
      />
      <path d="M1728 775L1691 704C1686 694 1684 686 1684 676A44 44 0 0 1 1772 676C1772 686 1770 694 1765 704Z" fill="none" stroke="#ffffff" strokeOpacity="0.14" strokeWidth="4" />
      <circle cx="1728" cy="676" r="22" fill="none" stroke="#ffffff" strokeOpacity="0.14" strokeWidth="4" />
      <circle cx="1728" cy="676" r="18" fill="#ffffff" stroke="#3a74a6" strokeWidth="4" />
    </svg>
  );
}

/* ---------- Icons ---------- */
const Chevron = () => (
  <svg width="16" height="12" viewBox="0 0 16 12" fill="none" stroke="currentColor" strokeWidth="3" aria-hidden="true">
    <path d="M1 2l7 7 7-7" />
  </svg>
);

const BrokenImage = () => (
  <svg width="32" height="32" viewBox="0 0 32 32" aria-hidden="true">
    <path d="M1 1h22l8 8v7L14 31H1z" fill="#c3d4f2" stroke="#9a9a9a" strokeWidth="1" />
    <path d="M2 31q6-11 13-11q5 0 8 3L14 31z" fill="#6fac4b" />
    <path d="M4 12q0-3 3-3q1-3 4-3q3 0 4 3q2 0 2 3z" fill="#fff" />
    <path d="M23 1v8h8z" fill="#fff" stroke="#9a9a9a" />
    <path d="M20 31l6-6 5-5v11z" fill="#c3d4f2" />
    <path d="M20 31l6-5 4 5z" fill="#6fac4b" />
  </svg>
);

function Header() {
  return (
    <header className="flex h-[130px] flex-col bg-[#1d1d1d] text-[#d1d1d1]">
      <div className="h-[9px] shrink-0 bg-[#d9569c]" />
      <div className="h-px shrink-0 bg-[#93378a]" />
      <div className="h-1 shrink-0 bg-[#bd2619]" />
      <div className="flex grow items-start justify-between pr-12 pl-[50px]">
        <div className="flex items-start gap-20">
          <button type="button" aria-label="Toggle navigation" className="mt-11 flex w-11 flex-col gap-2">
            <span className="h-1 rounded-sm bg-[#d1d1d1]" />
            <span className="h-1 rounded-sm bg-[#d1d1d1]" />
            <span className="h-1 rounded-sm bg-[#d1d1d1]" />
          </button>
          <a href="#home" className="mt-[22px] flex items-start text-[27px] leading-[38px] text-white">
            <BrokenImage />
            iPaaS hackathon
          </a>
        </div>
        <div className="mt-10 flex items-start gap-8">
          <button type="button" aria-label="Help" className="flex items-center gap-2 pt-px">
            <svg width="34" height="34" viewBox="0 0 34 34" fill="none" stroke="currentColor" aria-hidden="true">
              <circle cx="17" cy="17" r="14" strokeWidth="4" />
              <path d="M12 14q1-4 5-4q5 0 5 4q0 2-3 3q-2 1-2 3" strokeWidth="4" />
              <path d="M15 24h5" strokeWidth="4" />
            </svg>
            <span className="mt-2"><Chevron /></span>
          </button>
          <button type="button" className="flex items-start text-[24px] leading-7">
            <svg className="mt-1 mr-3.5" width="26" height="32" viewBox="0 0 26 32" fill="currentColor" aria-hidden="true">
              <circle cx="13" cy="8" r="7" />
              <path d="M0 31q0-14 8-14h10q8 0 8 14z" />
            </svg>
            John Smith
            <span className="mt-2 ml-2 flex"><Chevron /></span>
          </button>
        </div>
      </div>
    </header>
  );
}

function Toast() {
  return (
    <div role="alert" className="absolute top-[170px] right-10 flex h-[88px] w-[648px] bg-white text-[24px] text-[#222] shadow-[0_4px_12px_rgba(0,0,0,0.3)]">
      <div className="flex w-[106px] shrink-0 items-center justify-center bg-[#de7f33] pb-0.5">
        <svg width="46" height="44" viewBox="0 0 46 44" fill="none" stroke="#f8e0cd" aria-hidden="true">
          <path d="M23 3L43 41H3z" strokeWidth="4" strokeLinejoin="round" />
          <path d="M23 18v12M23 33v4" strokeWidth="5" />
        </svg>
      </div>
      <div className="flex grow items-center justify-between border-2 border-l-0 border-[#bbb] pr-[30px] pl-8">
        <p className="pb-1 whitespace-nowrap font-light">
          <strong className="font-bold text-[#333]">Tester:</strong> This is the message from API!!!!!
        </p>
        <button type="button" aria-label="Close">
          <svg width="26" height="26" viewBox="0 0 26 26" stroke="#4d4d4d" strokeWidth="5" aria-hidden="true">
            <path d="M2 2l22 22M24 2L2 24" />
          </svg>
        </button>
      </div>
    </div>
  );
}

const CARD = "bg-white shadow-[0_2px_4px_rgba(0,0,0,0.25)]";

export default function App() {
  return (
    <div className="relative h-screen overflow-hidden bg-[#f4f4f4] font-['Open_Sans',sans-serif]">
      <Header />
      <main className="flex flex-col gap-10 px-20 pt-20">
        <section className={`${CARD} px-10 pt-[38px] pb-10`}>
          <h2 className="mb-[34px] text-[32px] leading-[46px] text-[#333]">Map View</h2>
          <div className="relative h-[590px] overflow-hidden">
            <MapArt />
            <div className="absolute top-5 left-5 w-[68px] rounded-lg border-4 border-[#6790b6] bg-white">
              <button type="button" aria-label="Zoom in" className="flex h-[60px] w-full items-center justify-center border-b-2 border-[#ccc] pt-1">
                <svg width="26" height="26" viewBox="0 0 26 26" stroke="#000" strokeWidth="5" aria-hidden="true"><path d="M1 15h24M13 3v24" /></svg>
              </button>
              <button type="button" aria-label="Zoom out" className="flex h-[60px] w-full items-center justify-center">
                <svg width="26" height="26" viewBox="0 0 26 26" stroke="#000" strokeWidth="5" aria-hidden="true"><path d="M1 17h24" /></svg>
              </button>
            </div>
            <a href="#leaflet" className="absolute right-0 bottom-0 bg-white/70 px-2.5 font-['Liberation_Sans',sans-serif] text-[22px] leading-8 text-[#0078a8]">Leaflet</a>
          </div>
        </section>
        <div className="grid grid-cols-2 gap-10">
          <section className={`${CARD} h-60`} />
          <section className={`${CARD} h-60`} />
        </div>
      </main>
      <Toast />
    </div>
  );
}
